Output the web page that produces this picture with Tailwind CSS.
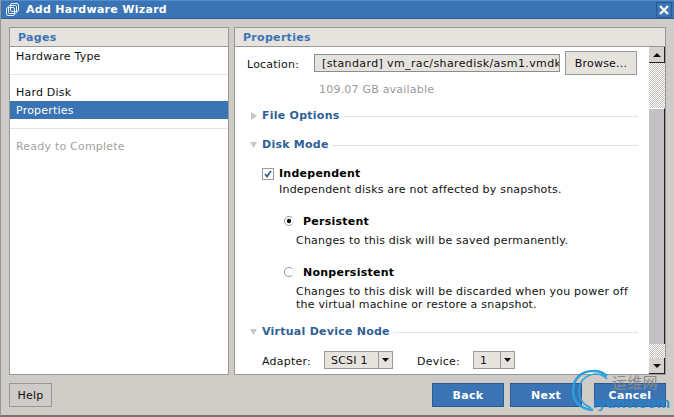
<!DOCTYPE html>
<html><head><meta charset="utf-8"><script src="https://cdn.jsdelivr.net/npm/@tailwindcss/browser@4"></script></head>
<body class="m-0">
<div class="relative w-[674px] h-[417px] overflow-hidden flex flex-col bg-[#cfcbc6] border-b-2 border-b-[#77736f] border-l border-l-[#9a9794] font-['DejaVu_Sans','Liberation_Sans',sans-serif] text-[11px] text-[#111] tracking-[0.21px]">
  <div class="relative h-[19px] shrink-0 bg-[#3a74b4] border-t border-t-[#4f8fd0] border-b border-b-[#2a5a90] flex items-center pl-[4px] pr-[2px]">
    <svg class="w-[15px] h-[15px] mr-[6px]" viewBox="0 0 15 15" fill="none" stroke="#e8eef6" stroke-width="1"><rect x="1.5" y="5.5" width="8" height="8" rx="1.5"/><rect x="5.5" y="1.5" width="8" height="8" rx="1.5"/><rect x="3.5" y="3.5" width="8" height="8" rx="1"/></svg>
    <span class="font-bold text-white text-[11px] tracking-[0.3px] pt-[1px]">Add Hardware Wizard</span>
    <div class="ml-auto w-[16px] h-[16px] border border-[#2a5a90] flex items-center justify-center">
      <svg class="w-[10px] h-[10px]" viewBox="0 0 10 10" stroke="#fff" stroke-width="2.4"><path d="M1 1L9 9M9 1L1 9"/></svg>
    </div>
  </div>
  <div class="flex-1 flex gap-[5px] pl-[8px] pr-[8px] pt-[8px] min-h-0">
    <div class="w-[220px] h-[348px] bg-white border border-[#9a9794] flex flex-col">
      <div class="h-[19px] shrink-0 bg-[#e6e3de] border-b border-b-[#9a9794] pl-[8px] font-bold text-[#3a74b4] leading-[20px] tracking-[0.3px]">Pages</div>
      <div class="pl-[6px] h-[18px] leading-[20px]">Hardware Type</div>
      <div class="h-px bg-[#e6e3de] mt-[9px] mb-[8px]"></div>
      <div class="pl-[6px] h-[18px] leading-[20px]">Hard Disk</div>
      <div class="pl-[6px] h-[18px] leading-[20px] bg-[#3a74b4] text-white">Properties</div>
      <div class="h-px bg-[#e6e3de] mt-[9px] mb-[8px]"></div>
      <div class="pl-[6px] h-[18px] leading-[20px] text-[#a3a3a3]">Ready to Complete</div>
    </div>
    <div class="flex-1 h-[348px] bg-white border border-[#9a9794] flex flex-col min-w-0">
      <div class="h-[19px] shrink-0 bg-[#e6e3de] border-b border-b-[#9a9794] pl-[8px] font-bold text-[#3a74b4] leading-[20px] tracking-[0.3px]">Properties</div>
      <div class="flex-1 flex min-h-0">
        <div class="flex-1 min-w-0 pl-[12px] pr-[11px] overflow-hidden">
          <div class="flex items-center h-[24px] mt-[4px]">
            <span class="w-[67px] leading-[18px] pt-[3px]">Location:</span>
            <div class="w-[246px] h-[18px] bg-[#e6e3de] border border-[#8f8d8a] pl-[7px] leading-[18px] overflow-hidden whitespace-nowrap tracking-[0.38px]">[standard] vm_rac/sharedisk/asm1.vmdk</div>
            <div class="ml-[5px] w-[72px] h-[24px] bg-[#e6e3de] border border-[#9a9794] flex items-center justify-center pt-[2px]">Browse...</div>
          </div>
          <div class="pl-[72px] mt-[7px] h-[16px] leading-[16px] text-[#999]">109.07 GB available</div>
          <div class="flex items-center h-[16px] mt-[10px]">
            <svg class="w-[6px] h-[8px] ml-[4px] mr-[5px]" viewBox="0 0 6 8"><path d="M0 0L6 4L0 8Z" fill="#c8c6c2"/></svg>
            <span class="font-bold text-[#2f6196] tracking-[0.25px] mr-[3px]">File Options</span><div class="flex-1 h-px bg-[#e6e3de]"></div>
          </div>
          <div class="flex items-center h-[16px] mt-[13px]">
            <svg class="w-[7px] h-[6px] ml-[3px] mr-[5px]" viewBox="0 0 7 6"><path d="M0 0L7 0L3.5 6Z" fill="#c8c6c2"/></svg>
            <span class="font-bold text-[#2f6196] tracking-[0.25px] mr-[3px]">Disk Mode</span><div class="flex-1 h-px bg-[#e6e3de]"></div>
          </div>
          <div class="flex items-center h-[16px] mt-[13px] pl-[15px]">
            <div class="w-[12px] h-[12px] border border-[#9a9aa0] flex items-center justify-center mr-[5px]">
              <svg class="w-[8px] h-[8px]" viewBox="0 0 8 8" fill="none" stroke="#2f6196" stroke-width="1.8"><path d="M1 4L3 6.5L7 1"/></svg>
            </div>
            <span class="font-bold text-black tracking-[0.25px]">Independent</span>
          </div>
          <div class="pl-[32px] h-[16px] leading-[16px]">Independent disks are not affected by snapshots.</div>
          <div class="flex items-center h-[16px] mt-[16px] pl-[37px]">
            <svg class="w-[10px] h-[10px] mr-[9px] -mt-[2px]" viewBox="0 0 11 11"><path d="M9 2A5 5 0 1 0 9 9" fill="none" stroke="#8d8d8d"/><path d="M9 9A5 5 0 0 0 9 2" fill="none" stroke="#e6e6e6"/><circle cx="5.5" cy="5.5" r="2.4" fill="#111"/></svg>
            <span class="font-bold text-black tracking-[0.25px]">Persistent</span>
          </div>
          <div class="pl-[49px] mt-[3px] h-[16px] leading-[16px]">Changes to this disk will be saved permanently.</div>
          <div class="flex items-center h-[16px] mt-[16px] pl-[37px]">
            <svg class="w-[10px] h-[10px] mr-[9px] -mt-[2px]" viewBox="0 0 11 11"><path d="M9 2A5 5 0 1 0 9 9" fill="none" stroke="#8d8d8d"/><path d="M9 9A5 5 0 0 0 9 2" fill="none" stroke="#e6e6e6"/></svg>
            <span class="font-bold text-black tracking-[0.25px]">Nonpersistent</span>
          </div>
          <div class="pl-[49px] mt-[4px] leading-[13px] whitespace-nowrap">Changes to this disk will be discarded when you power off<br>the virtual machine or restore a snapshot.</div>
          <div class="flex items-center h-[16px] mt-[13px]">
            <svg class="w-[7px] h-[6px] ml-[3px] mr-[5px]" viewBox="0 0 7 6"><path d="M0 0L7 0L3.5 6Z" fill="#c8c6c2"/></svg>
            <span class="font-bold text-[#2f6196] tracking-[0.25px] mr-[3px]">Virtual Device Node</span><div class="flex-1 h-px bg-[#e6e3de]"></div>
          </div>
          <div class="flex items-center h-[18px] mt-[11px] pl-[15px]">
            <span class="w-[62px] pt-[5px]">Adapter:</span>
            <div class="w-[69px] h-[18px] bg-[#e6e3de] border border-[#9a9794] flex">
              <span class="flex-1 pl-[6px] leading-[17px]">SCSI 1</span>
              <div class="w-[14px] border-l border-l-[#9a9794] flex items-center justify-center"><svg class="w-[7px] h-[4px]" viewBox="0 0 7 4"><path d="M0 0H7L3.5 4Z" fill="#111"/></svg></div>
            </div>
            <span class="ml-[24px] w-[56px] pt-[5px]">Device:</span>
            <div class="w-[42px] h-[18px] bg-[#e6e3de] border border-[#9a9794] flex">
              <span class="flex-1 pl-[6px] leading-[17px]">1</span>
              <div class="w-[14px] border-l border-l-[#9a9794] flex items-center justify-center"><svg class="w-[7px] h-[4px]" viewBox="0 0 7 4"><path d="M0 0H7L3.5 4Z" fill="#111"/></svg></div>
            </div>
          </div>
        </div>
        <div class="w-[16px] shrink-0 flex flex-col bg-[repeating-conic-gradient(#c4c1bd_0_25%,#ffffff_0_50%)] bg-[length:2px_2px]">
          <div class="h-[16px] shrink-0 bg-[#d6d3ce] border-r border-b border-r-[#222] border-b-[#222] flex items-center justify-center"><svg class="w-[8px] h-[4px]" viewBox="0 0 8 4"><path d="M0 4H8L4 0Z" fill="#111"/></svg></div>
          <div class="h-[45px] shrink-0"></div>
          <div class="h-[236px] shrink-0 bg-[#c4c1c4] border-r border-r-[#222] border-t border-t-white"></div>
          <div class="flex-1"></div>
          <div class="h-[16px] shrink-0 bg-[#d6d3ce] border-r border-b border-r-[#222] border-b-[#222] flex items-center justify-center"><svg class="w-[8px] h-[4px]" viewBox="0 0 8 4"><path d="M0 0H8L4 4Z" fill="#111"/></svg></div>
        </div>
      </div>
    </div>
  </div>
  <div class="h-[32px] shrink-0 flex items-start pl-[8px] pr-[8px] pb-[8px]">
    <div class="w-[43px] h-[24px] border border-[#9a9794] flex items-center justify-center pt-[2px]">Help</div>
    <div class="ml-auto flex">
      <div class="w-[72px] h-[24px] bg-[#3a74b4] border border-[#2a5a90] flex items-center justify-center font-bold text-white tracking-[0.3px] pt-[2px]">Back</div>
      <div class="ml-[6px] w-[72px] h-[24px] bg-[#3a74b4] border border-[#2a5a90] flex items-center justify-center font-bold text-white tracking-[0.3px] pt-[2px]">Next</div>
      <div class="ml-[12px] w-[72px] h-[24px] bg-[#3a74b4] border border-[#2a5a90] flex items-center justify-center font-bold text-white tracking-[0.3px] pt-[2px]">Cancel</div>
    </div>
  </div>
  <svg class="absolute left-[570px] top-[369px] w-[44px] h-[44px]" viewBox="0 0 44 44" fill="none" stroke="#2a9fdc"><path d="M36 7A20 20 0 0 0 22 2C8 2 2 12 2 22C2 32 9 40 22 41" stroke-width="2.5"/><path d="M36 10A15 15 0 0 0 24 5C13 6 8 14 8 22C8 30 13 36 20 39" stroke-width="1.5"/></svg>
  <span class="absolute left-[611px] top-[373px] text-[15px] leading-[18px] text-[#8a8a8a] font-['Noto_Sans_CJK_SC',sans-serif]">运维网</span>
  <span class="absolute left-[592px] top-[394px] text-[15px] leading-[18px] font-bold text-[#1f86d0]/85 font-['Liberation_Sans',sans-serif] tracking-[0.5px]">iyunv.com</span>
</div>
</body></html>
